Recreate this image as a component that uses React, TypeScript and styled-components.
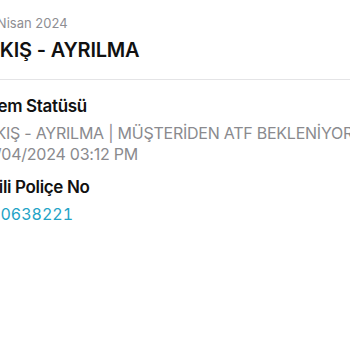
import { createGlobalStyle, styled } from "styled-components"

const GlobalStyle = createGlobalStyle`
  html, body {
    margin: 0;
    padding: 0;
    background: #ffffff;
    overflow: hidden;
  }
  body {
    font-family: Inter, "Noto Sans", "Liberation Sans", sans-serif;
    -webkit-font-smoothing: antialiased;
  }
`

// the view is scrolled a little to the right, so the left edge of the text is cut
const Page = styled.div`
  width: 420px;
  margin-left: -20px;
  white-space: nowrap;
`

const Header = styled.header`
  padding: 14px 0 16px 0;
  border-bottom: 1px solid #e4e4e6;
`

const DateText = styled.div`
  font-size: 13px;
  line-height: 18px;
  color: #8e8e93;
`

const Title = styled.h1`
  margin: 5px 0 0 0;
  font-size: 20px;
  line-height: 26px;
  font-weight: 600;
  letter-spacing: -0.01em;
  color: #111111;
`

const Details = styled.section`
  padding: 15px 0;
  display: flex;
  flex-direction: column;
  gap: 11px;
`

const Field = styled.div`
  display: flex;
  flex-direction: column;
  gap: 6px;
`

const Label = styled.div`
  font-size: 17px;
  line-height: 22px;
  font-weight: 600;
  letter-spacing: -0.02em;
  color: #111111;
`

const Value = styled.div`
  font-size: 16px;
  line-height: 21px;
  letter-spacing: -0.015em;
  color: #8a8a8e;
`

const LinkValue = styled.a`
  display: block;
  padding-left: 10px;
  font-size: 16px;
  line-height: 21px;
  font-variant-numeric: tabular-nums;
  color: #22a3c6;
  text-decoration: none;
`

export default function App() {
  return (
    <>
      <GlobalStyle />
      <Page>
        <Header>
          <DateText>12 Nisan 2024</DateText>
          <Title>ÇIKIŞ - AYRILMA</Title>
        </Header>
        <Details>
          <Field>
            <Label>İşlem Statüsü</Label>
            <Value>
              ÇIKIŞ - AYRILMA | MÜŞTERİDEN ATF BEKLENİYOR
              <br />
              12/04/2024 03:12 PM
            </Value>
          </Field>
          <Field>
            <Label>İlgili Poliçe No</Label>
            <LinkValue>10638221</LinkValue>
          </Field>
        </Details>
      </Page>
    </>
  )
}
